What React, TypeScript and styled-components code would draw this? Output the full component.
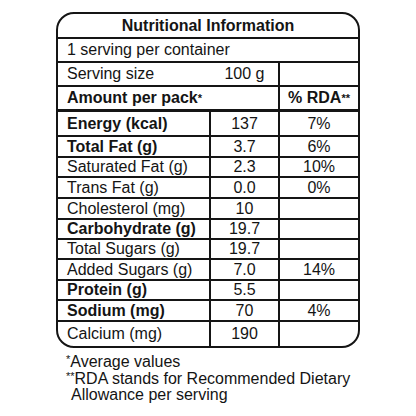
import styled, {createGlobalStyle} from 'styled-components';

const GlobalStyle = createGlobalStyle`
  html, body {
    margin: 0;
    padding: 0;
    background: #fff;
  }
  body {
    font-family: "Liberation Sans", Arial, sans-serif;
    color: #141414;
  }
`;

const Page = styled.div`
  width: 416px;
  height: 416px;
  padding-top: 12px;
  box-sizing: border-box;
  display: flex;
  flex-direction: column;
  align-items: center;
`;

const Wrap = styled.div`
  width: 304px;
`;

const Card = styled.div`
  width: 304px;
  box-sizing: border-box;
  border: 2px solid #151515;
  border-radius: 18px;
  overflow: hidden;
  display: flex;
  flex-direction: column;
`;

const Title = styled.div`
  height: 25px;
  box-sizing: border-box;
  border-bottom: 2px solid #151515;
  display: flex;
  align-items: center;
  justify-content: center;
  font-size: 16px;
  font-weight: 700;
`;

const Row = styled.div<{$h: number; $line?: number}>`
  height: ${p => p.$h}px;
  box-sizing: border-box;
  border-bottom: ${p => (p.$line ?? 2)}px solid #151515;
  display: grid;
  grid-template-columns: 153px 69px 1fr;
  font-size: 16px;
  &:last-child {
    border-bottom: none;
  }
`;

const FullRow = styled(Row)`
  display: flex;
  align-items: center;
  padding-left: 9px;
`;

const Label = styled.div<{$bold?: boolean; $noLine?: boolean}>`
  display: flex;
  align-items: center;
  padding-left: 9px;
  font-weight: ${p => (p.$bold ? 700 : 400)};
  border-right: ${p => (p.$noLine ? '2px solid transparent' : '2px solid #151515')};
  white-space: nowrap;
`;

const Value = styled.div`
  display: flex;
  align-items: center;
  justify-content: center;
  border-right: 2px solid #151515;
`;

const Rda = styled.div<{$bold?: boolean}>`
  display: flex;
  align-items: center;
  justify-content: center;
  font-weight: ${p => (p.$bold ? 700 : 400)};
  white-space: nowrap;
`;

const Star = styled.sup`
  font-size: 11px;
  line-height: 0;
  vertical-align: 4px;
`;

const Footer = styled.div`
  margin-top: 6px;
  padding-left: 10px;
  font-size: 16px;
  line-height: 16.5px;
`;

const Indent = styled.div`
  padding-left: 5px;
`;

type Nutrient = {
  name: string;
  value: string;
  rda?: string;
  bold?: boolean;
  h: number;
};

const nutrients: Nutrient[] = [
  {name: 'Energy (kcal)', value: '137', rda: '7%', bold: true, h: 25},
  {name: 'Total Fat (g)', value: '3.7', rda: '6%', bold: true, h: 21},
  {name: 'Saturated Fat (g)', value: '2.3', rda: '10%', h: 20},
  {name: 'Trans Fat (g)', value: '0.0', rda: '0%', h: 21},
  {name: 'Cholesterol (mg)', value: '10', h: 21},
  {name: 'Carbohydrate (g)', value: '19.7', bold: true, h: 20},
  {name: 'Total Sugars (g)', value: '19.7', h: 20},
  {name: 'Added Sugars (g)', value: '7.0', rda: '14%', h: 21},
  {name: 'Protein (g)', value: '5.5', bold: true, h: 20},
  {name: 'Sodium (mg)', value: '70', rda: '4%', bold: true, h: 21},
  {name: 'Calcium (mg)', value: '190', h: 24},
];

export default function App() {
  return (
    <Page>
      <GlobalStyle />
      <Wrap>
        <Card>
          <Title>Nutritional Information</Title>
          <FullRow $h={24}>1 serving per container</FullRow>
          <Row $h={24}>
            <Label $noLine>Serving size</Label>
            <Value>100 g</Value>
            <Rda />
          </Row>
          <Row $h={25} $line={3}>
            <Label $bold $noLine>
              Amount per pack<Star>*</Star>
            </Label>
            <Value />
            <Rda $bold>
              % RDA<Star>**</Star>
            </Rda>
          </Row>
          {nutrients.map(n => (
            <Row key={n.name} $h={n.h}>
              <Label $bold={n.bold}>{n.name}</Label>
              <Value>{n.value}</Value>
              <Rda>{n.rda}</Rda>
            </Row>
          ))}
        </Card>
        <Footer>
          <div>
            <Star>*</Star>Average values
          </div>
          <div>
            <Star>**</Star>RDA stands for Recommended Dietary
          </div>
          <Indent>Allowance per serving</Indent>
        </Footer>
      </Wrap>
    </Page>
  );
}
